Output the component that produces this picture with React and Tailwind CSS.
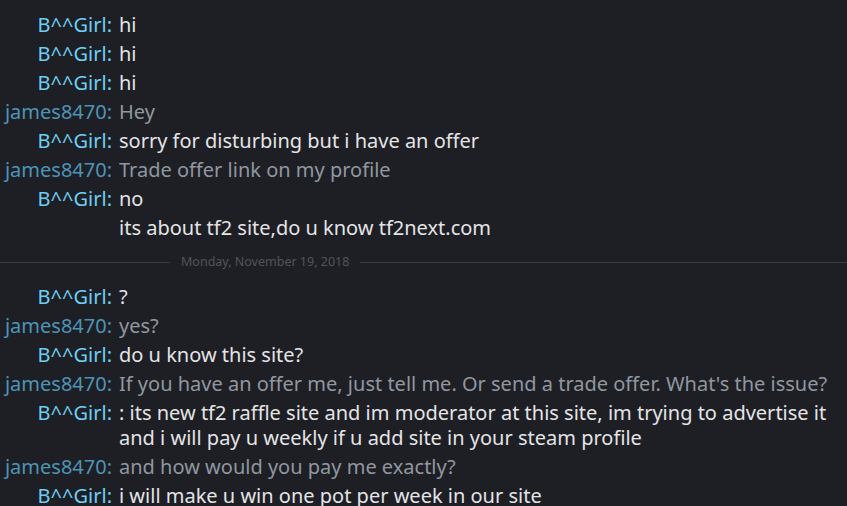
import React from "react";

const before = [
  { from: "B^^Girl", me: false, text: "hi" },
  { from: "B^^Girl", me: false, text: "hi" },
  { from: "B^^Girl", me: false, text: "hi" },
  { from: "james8470", me: true, text: "Hey" },
  { from: "B^^Girl", me: false, text: "sorry for disturbing but i have an offer" },
  { from: "james8470", me: true, text: "Trade offer link on my profile" },
  { from: "B^^Girl", me: false, text: "no" },
  { from: "", me: false, text: "its about tf2 site,do u know tf2next.com" },
];

const after = [
  { from: "B^^Girl", me: false, text: "?" },
  { from: "james8470", me: true, text: "yes?" },
  { from: "B^^Girl", me: false, text: "do u know this site?" },
  {
    from: "james8470",
    me: true,
    text: "If you have an offer me, just tell me. Or send a trade offer. What's the issue?",
  },
  {
    from: "B^^Girl",
    me: false,
    text: ": its new tf2 raffle site and im moderator at this site, im trying to advertise it and i will pay u weekly if u add site in your steam profile",
  },
  { from: "james8470", me: true, text: "and how would you pay me exactly?" },
  { from: "B^^Girl", me: false, text: "i will make u win one pot per week in our site" },
];

function Line({ msg }) {
  return (
    <div className="flex py-[2px] leading-[25px]">
      <div
        className={
          "w-[119px] shrink-0 text-right pr-[7px] whitespace-nowrap " +
          (msg.me ? "text-[#4d94b8]" : "text-[#6dcff6]")
        }
      >
        {msg.from ? msg.from + ":" : ""}
      </div>
      <div
        className={
          "flex-1 pr-3 " + (msg.me ? "text-[#9097a0]" : "text-[#e4e4e6]")
        }
      >
        {msg.text}
      </div>
    </div>
  );
}

export default function App() {
  return (
    <div className="w-[847px] h-[506px] overflow-hidden bg-[#1e1f24] pt-[10px] font-['Noto_Sans',sans-serif] text-[20px]">
      {before.map((m, i) => (
        <Line key={"a" + i} msg={m} />
      ))}
      <div className="flex items-center h-[40px] gap-[11px]">
        <div className="w-[170px] h-px bg-[#3a3d44]" />
        <span className="text-[12.5px] text-[#50545b]">Monday, November 19, 2018</span>
        <div className="flex-1 h-px bg-[#3a3d44]" />
      </div>
      {after.map((m, i) => (
        <Line key={"b" + i} msg={m} />
      ))}
    </div>
  );
}
